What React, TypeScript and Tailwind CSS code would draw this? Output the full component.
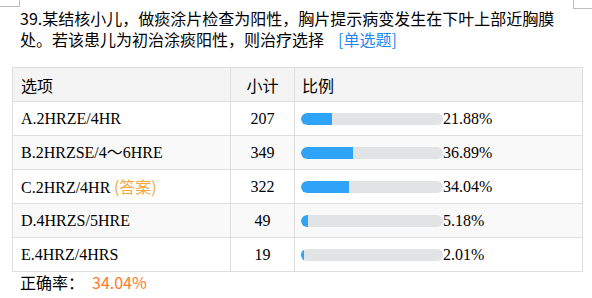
import React from "react";

interface OptionRow {
  label: string;
  count: number;
  percent: number;
  answer?: boolean;
}

const rows: OptionRow[] = [
  { label: "A.2HRZE/4HR", count: 207, percent: 21.88 },
  { label: "B.2HRZSE/4～6HRE", count: 349, percent: 36.89 },
  { label: "C.2HRZ/4HR", count: 322, percent: 34.04, answer: true },
  { label: "D.4HRZS/5HRE", count: 49, percent: 5.18 },
  { label: "E.4HRZ/4HRS", count: 19, percent: 2.01 },
];

const sans = "font-['Noto_Sans_CJK_SC',sans-serif]";
const serif = "font-['Liberation_Serif','Noto_Sans_CJK_SC',serif]";

export default function App() {
  return (
    <div className="relative w-[592px] h-[298px] bg-white text-black overflow-hidden">
      {/* page corner marks */}
      <div className="absolute left-0 top-0 w-[20px] h-[7px] border-r border-b border-[#bdbdbd]" />
      <div className="absolute left-[573px] top-0 w-[19px] h-[9px] border-l border-b border-[#bdbdbd]" />

      <div className={`${sans} pl-[20px] pt-[8px] text-[16px] leading-[21px]`}>
        <div>39.某结核小儿，做痰涂片检查为阳性，胸片提示病变发生在下叶上部近胸膜</div>
        <div>
          <span>处。若该患儿为初治涂痰阳性，则治疗选择</span>
          <span className="ml-[14px] text-[#1e88f0]">[单选题]</span>
        </div>
      </div>

      <div className="pl-[12px] mt-[17px]">
        <table className={`${serif} w-[570px] border-collapse text-[16px] table-fixed`}>
          <colgroup>
            <col className="w-[218px]" />
            <col className="w-[64px]" />
            <col className="w-[288px]" />
          </colgroup>
          <thead>
            <tr className="h-[34px] bg-[#f4f4f4]">
              <th className={`${sans} border border-[#dedede] pl-[8px] text-left font-normal`}>选项</th>
              <th className={`${sans} border border-[#dedede] text-center font-normal`}>小计</th>
              <th className={`${sans} border border-[#dedede] pl-[7px] text-left font-normal`}>比例</th>
            </tr>
          </thead>
          <tbody>
            {rows.map((r, i) => (
              <tr key={r.label} className={`h-[34px] ${i % 2 === 1 ? "bg-[#f9f9f9]" : "bg-white"}`}>
                <td className="border border-[#dedede] pl-[8px]">
                  {r.label}
                  {r.answer && <span className={`${sans} text-[#f5a742]`}> (答案)</span>}
                </td>
                <td className="border border-[#dedede] text-center">{r.count}</td>
                <td className="border border-[#dedede] pl-[6px]">
                  <div className="flex items-center">
                    <div className="w-[142px] h-[12px] rounded-full bg-[#e2e3e5] overflow-hidden">
                      <div className="h-full bg-[#2ea3f7] rounded-l-full" style={{ width: `${r.percent}%` }} />
                    </div>
                    <span>{r.percent.toFixed(2)}%</span>
                  </div>
                </td>
              </tr>
            ))}
          </tbody>
        </table>
      </div>

      <p className={`${sans} pl-[20px] text-[16px] leading-[20px]`}>
        正确率：<span className="ml-[8px] text-[#ff7a2a]">34.04%</span>
      </p>
    </div>
  );
}
